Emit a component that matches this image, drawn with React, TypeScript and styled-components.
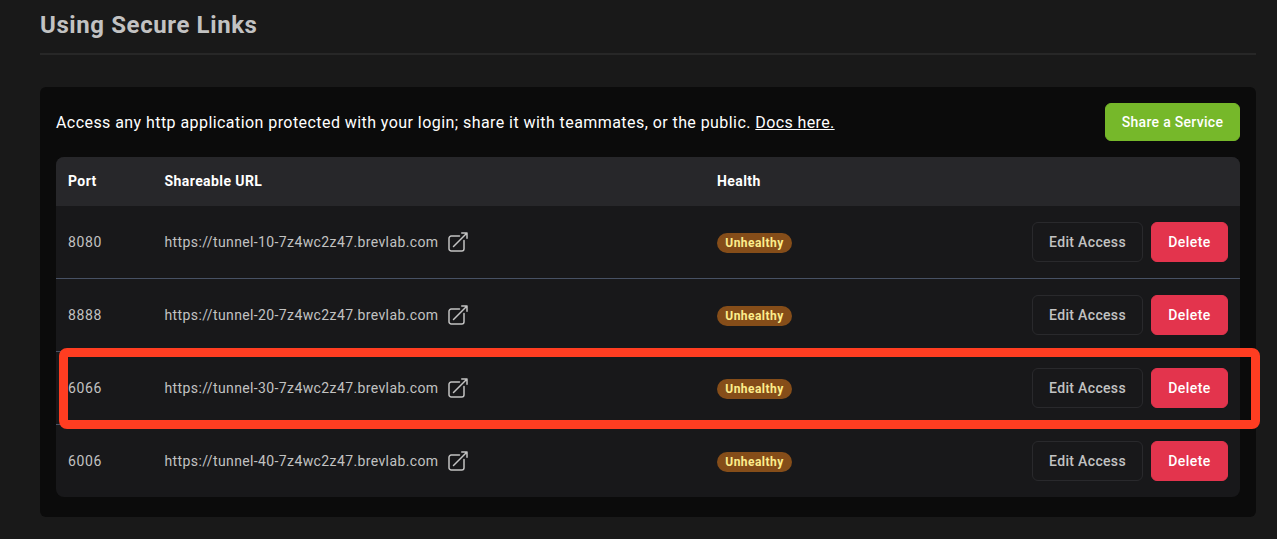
import React from "react";
import styled, { createGlobalStyle } from "styled-components";

const GlobalStyle = createGlobalStyle`
  * { box-sizing: border-box; }
  body {
    margin: 0;
    background: #191919;
    font-family: Roboto, "Liberation Sans", sans-serif;
    color: #c2c2c2;
    overflow: hidden;
  }
`;

const Page = styled.main`
  height: 539px;
  padding: 0 21px 0 40px;
`;

const Title = styled.h1`
  height: 55px;
  margin: 0;
  padding-top: 9px;
  border-bottom: 2px solid #272727;
  font-size: 24px;
  line-height: 32px;
  font-weight: 700;
  letter-spacing: 0.6px;
  white-space: nowrap;
`;

const Card = styled.section`
  height: 430px;
  margin-top: 32px;
  padding: 16px;
  border-radius: 6px;
  background: #0b0b0b;
`;

const CardHeader = styled.div`
  display: flex;
  align-items: center;
  justify-content: space-between;
  height: 38px;
  margin-bottom: 16px;
`;

const Intro = styled.p`
  margin: 0;
  padding-top: 2px;
  color: #fff;
  font-size: 16px;
  line-height: 24px;
  letter-spacing: 0.435px;
  white-space: nowrap;
`;

const DocsLink = styled.a`
  color: inherit;
  letter-spacing: 0.38px;
  text-decoration: underline;
  text-underline-offset: 1px;
`;

const Button = styled.button<{ $kind: "primary" | "outline" | "danger" }>`
  height: ${(p) => (p.$kind === "primary" ? 38 : 40)}px;
  width: ${(p) => ({ primary: 135, outline: 111, danger: 77 })[p.$kind]}px;
  padding: 0;
  border: 1px solid ${(p) => ({ primary: "#76b82a", outline: "#29292c", danger: "#e3344d" })[p.$kind]};
  border-radius: 6px;
  background: ${(p) => ({ primary: "#76b82a", outline: "transparent", danger: "#e3344d" })[p.$kind]};
  color: ${(p) => (p.$kind === "outline" ? "#c2c2c2" : "#fff")};
  font: inherit;
  font-size: 14px;
  font-weight: 500;
  letter-spacing: ${(p) => ({ primary: 0.3, outline: 0.34, danger: 0.42 })[p.$kind]}px;
  white-space: nowrap;
`;

const Table = styled.div`
  position: relative;
  border-radius: 8px;
  background: #18181a;
`;

const Row = styled.div`
  display: grid;
  grid-template-columns: 96.5px 552.5px 1fr;
  align-items: center;
  height: 73px;
  padding: 0 12px;
  border-bottom: 1px solid #475164;
  font-size: 14px;
  line-height: 20px;

  &:nth-last-child(2) {
    height: 72px;
    border-bottom: 0;
  }
`;

const HeadRow = styled(Row)`
  height: 49px;
  padding-bottom: 1px;
  border: 0;
  border-radius: 8px 8px 0 0;
  background: #27272a;
  color: #fff;
  font-weight: 700;
  letter-spacing: 0.42px;
`;

const Port = styled.span`
  letter-spacing: 0.6px;
`;

const UrlCell = styled.div`
  display: flex;
  align-items: center;
  gap: 8px;
`;

const Url = styled.span`
  width: 273.5px;
  letter-spacing: 0.385px;
  white-space: nowrap;
`;

const StatusCell = styled.div`
  display: flex;
  align-items: center;
  justify-content: space-between;
`;

const Badge = styled.span`
  width: 75px;
  height: 20px;
  margin-top: 1px;
  border-radius: 10px;
  background: #854d19;
  color: #fdee8c;
  font-size: 12px;
  line-height: 20px;
  font-weight: 700;
  letter-spacing: 0.46px;
  text-align: center;
`;

const Actions = styled.div`
  display: flex;
  gap: 8px;
`;

const Highlight = styled.div`
  position: absolute;
  top: 191px;
  left: 3px;
  right: -20px;
  height: 81px;
  border: 9px solid #ff3d21;
  border-radius: 8px;
  pointer-events: none;
`;

function ExternalIcon() {
  return (
    <svg width="24" height="24" viewBox="0 0 24 24" fill="none" stroke="#c2c2c2" strokeWidth="1.5" strokeLinecap="round" strokeLinejoin="round">
      <path d="M13.5 6H5.25A2.25 2.25 0 0 0 3 8.25v10.5A2.25 2.25 0 0 0 5.25 21h10.5A2.25 2.25 0 0 0 18 18.75V10.5m-10.5 6L21 3m0 0h-5.25M21 3v5.25" />
    </svg>
  );
}

const services = [
  { port: "8080", url: "https://tunnel-10-7z4wc2z47.brevlab.com" },
  { port: "8888", url: "https://tunnel-20-7z4wc2z47.brevlab.com" },
  { port: "6066", url: "https://tunnel-30-7z4wc2z47.brevlab.com" },
  { port: "6006", url: "https://tunnel-40-7z4wc2z47.brevlab.com" },
];

export default function App() {
  return (
    <Page>
      <GlobalStyle />
      <Title>Using Secure Links</Title>
      <Card>
        <CardHeader>
          <Intro>
            Access any http application protected with your login; share it with teammates, or the public.{" "}
            <DocsLink>Docs here.</DocsLink>
          </Intro>
          <Button $kind="primary">Share a Service</Button>
        </CardHeader>
        <Table>
          <HeadRow>
            <span>Port</span>
            <span>Shareable URL</span>
            <span>Health</span>
          </HeadRow>
          {services.map((s) => (
            <Row key={s.port}>
              <Port>{s.port}</Port>
              <UrlCell>
                <Url>{s.url}</Url>
                <ExternalIcon />
              </UrlCell>
              <StatusCell>
                <Badge>Unhealthy</Badge>
                <Actions>
                  <Button $kind="outline">Edit Access</Button>
                  <Button $kind="danger">Delete</Button>
                </Actions>
              </StatusCell>
            </Row>
          ))}
          <Highlight />
        </Table>
      </Card>
    </Page>
  );
}
